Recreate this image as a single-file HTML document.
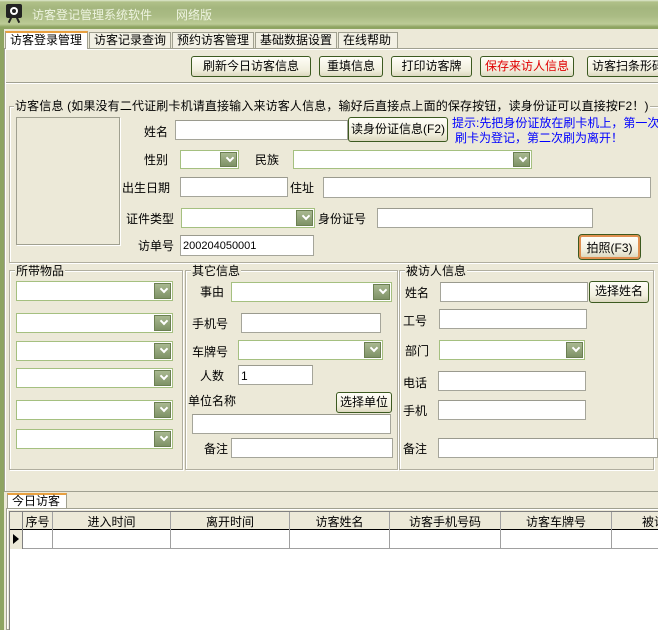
<!DOCTYPE html>
<html><head><meta charset="utf-8"><style>
*{margin:0;padding:0;box-sizing:border-box}
body{width:658px;height:630px;overflow:hidden;background:#ece9d8;font-family:"Liberation Sans","WenQuanYi Zen Hei","Noto Sans CJK SC",sans-serif;font-size:12px;color:#000;position:relative}
.a{position:absolute}
.t{position:absolute;white-space:nowrap;line-height:14px}
.in{position:absolute;background:#fff;border:1px solid #a5a59a;border-top-color:#9a9a8e}
.cb{position:absolute;background:#fff;border:1px solid #a5c080}
.cb::after{content:"";position:absolute;right:1px;top:1px;bottom:1px;width:15px;background:linear-gradient(#a8b890,#7e9266);border:1px solid #6c8052}
.cb i{position:absolute;right:5px;top:50%;width:6px;height:6px;border-right:2px solid #fff;border-bottom:2px solid #fff;transform:rotate(45deg);z-index:2;margin-top:-5px}
.bt{position:absolute;background:linear-gradient(#fffef8,#f0eedc 70%,#dcd8c0);border:1px solid #3c5a20;border-radius:3px;text-align:center;line-height:18px;font-size:12px}
.gb{position:absolute;border:1px solid #b0ae9f;box-shadow:inset 1px 1px 0 #fff,1px 1px 0 #fff}
.gl{position:absolute;background:#ece9d8;padding:0 1px;white-space:nowrap;line-height:14px}
.vl{position:absolute;top:512px;width:1px;height:37px;background:#a0a0a0}
.hd{position:absolute;top:515px;text-align:center;white-space:nowrap;line-height:14px}
</style></head><body>
<div class="a" style="left:0;top:0;width:658px;height:29px;background:linear-gradient(#e0ead0 0,#b0c088 2px,#a4b67e 8px,#aabb84 16px,#bccb96 24px,#8ea462 27px,#8ea462 29px)"></div>
<div class="a" style="left:6px;top:4px;width:16px;height:14px;background:#222;border-radius:2px"></div>
<div class="a" style="left:10px;top:7px;width:8px;height:8px;background:#fff;border-radius:50%"></div>
<div class="a" style="left:12px;top:9px;width:4px;height:4px;background:#222;border-radius:50%"></div>
<div class="a" style="left:9px;top:17px;width:2px;height:6px;background:#222;transform:rotate(25deg)"></div>
<div class="a" style="left:17px;top:17px;width:2px;height:6px;background:#222;transform:rotate(-25deg)"></div>
<div class="t" style="left:32px;top:8px;color:#eef4e0;font-size:12px">访客登记管理系统软件</div>
<div class="t" style="left:176px;top:8px;color:#eef4e0">网络版</div>
<div class="a" style="left:0;top:29px;width:4px;height:601px;background:#8ea462"></div>
<div class="a" style="left:4px;top:48px;width:654px;height:444px;border:1px solid #a0a090;border-right:none;background:#ece9d8;box-shadow:inset 1px 1px 0 #fff"></div>
<div class="a" style="left:5px;top:31px;width:83px;height:18px;background:#fff;border:1px solid #a0a090;border-bottom:none;border-top:2px solid #e8a040"></div>
<div class="t" style="left:10px;top:33px;font-size:12px">访客登录管理</div>
<div class="a" style="left:89px;top:32px;width:82px;height:16px;border:1px solid #a0a090;border-bottom:none;background:#f2f0e4"></div>
<div class="t" style="left:94px;top:33px">访客记录查询</div>
<div class="a" style="left:172px;top:32px;width:82px;height:16px;border:1px solid #a0a090;border-bottom:none;background:#f2f0e4"></div>
<div class="t" style="left:177px;top:33px">预约访客管理</div>
<div class="a" style="left:255px;top:32px;width:82px;height:16px;border:1px solid #a0a090;border-bottom:none;background:#f2f0e4"></div>
<div class="t" style="left:260px;top:33px">基础数据设置</div>
<div class="a" style="left:338px;top:32px;width:60px;height:16px;border:1px solid #a0a090;border-bottom:none;background:#f2f0e4"></div>
<div class="t" style="left:343px;top:33px">在线帮助</div>
<div class="bt" style="left:191px;top:56px;width:120px;height:21px">刷新今日访客信息</div>
<div class="bt" style="left:319px;top:56px;width:64px;height:21px">重填信息</div>
<div class="bt" style="left:391px;top:56px;width:81px;height:21px">打印访客牌</div>
<div class="bt" style="left:480px;top:56px;width:94px;height:21px;color:#e00000">保存来访人信息</div>
<div class="bt" style="left:587px;top:56px;width:80px;height:21px;text-align:left;padding-left:4px">访客扫条形码</div>
<div class="a" style="left:6px;top:82px;width:652px;height:2px;border-top:1px solid #a0a090;border-bottom:1px solid #fff"></div>
<div class="gb" style="left:9px;top:106px;width:660px;height:157px"></div>
<div class="gl" style="left:14px;top:99px;letter-spacing:0.15px">访客信息 (如果没有二代证刷卡机请直接输入来访客人信息，输好后直接点上面的保存按钮，读身份证可以直接按F2！)</div>
<div class="a" style="left:16px;top:117px;width:104px;height:128px;border:1px solid #a0a090;box-shadow:1px 1px 0 #fff"></div>
<div class="t" style="left:144px;top:125px">姓名</div>
<div class="in" style="left:175px;top:120px;width:173px;height:20px"></div>
<div class="bt" style="left:348px;top:117px;width:100px;height:25px;line-height:23px">读身份证信息(F2)</div>
<div class="t" style="left:452px;top:116px;color:#0000ff">提示:先把身份证放在刷卡机上，第一次</div>
<div class="t" style="left:455px;top:131px;color:#0000ff">刷卡为登记，第二次刷为离开！</div>
<div class="t" style="left:144px;top:153px">性别</div>
<div class="cb" style="left:180px;top:150px;width:59px;height:19px"><i></i></div>
<div class="t" style="left:255px;top:153px">民族</div>
<div class="cb" style="left:293px;top:150px;width:239px;height:19px"><i></i></div>
<div class="t" style="left:122px;top:181px">出生日期</div>
<div class="in" style="left:180px;top:177px;width:108px;height:20px"></div>
<div class="t" style="left:290px;top:181px">住址</div>
<div class="in" style="left:323px;top:177px;width:328px;height:21px"></div>
<div class="t" style="left:126px;top:212px">证件类型</div>
<div class="cb" style="left:181px;top:208px;width:134px;height:20px"><i></i></div>
<div class="t" style="left:318px;top:212px">身份证号</div>
<div class="in" style="left:377px;top:208px;width:216px;height:20px"></div>
<div class="t" style="left:138px;top:239px">访单号</div>
<div class="in" style="left:180px;top:235px;width:134px;height:21px"></div>
<div class="t" style="left:183px;top:239px;font-size:11px">200204050001</div>
<div class="bt" style="left:579px;top:235px;width:61px;height:24px;line-height:22px;border:2px solid #e09050;outline:1px solid #3c5a20">拍照(F3)</div>
<div class="gb" style="left:9px;top:270px;width:174px;height:200px"></div>
<div class="gl" style="left:15px;top:264px">所带物品</div>
<div class="cb" style="left:16px;top:281px;width:157px;height:20px"><i></i></div>
<div class="cb" style="left:16px;top:313px;width:157px;height:20px"><i></i></div>
<div class="cb" style="left:16px;top:341px;width:157px;height:20px"><i></i></div>
<div class="cb" style="left:16px;top:368px;width:157px;height:20px"><i></i></div>
<div class="cb" style="left:16px;top:400px;width:157px;height:20px"><i></i></div>
<div class="cb" style="left:16px;top:429px;width:157px;height:20px"><i></i></div>
<div class="gb" style="left:185px;top:270px;width:213px;height:200px"></div>
<div class="gl" style="left:191px;top:264px">其它信息</div>
<div class="t" style="left:200px;top:285px">事由</div>
<div class="cb" style="left:231px;top:282px;width:161px;height:20px"><i></i></div>
<div class="t" style="left:192px;top:317px">手机号</div>
<div class="in" style="left:241px;top:313px;width:140px;height:20px"></div>
<div class="t" style="left:192px;top:345px">车牌号</div>
<div class="cb" style="left:238px;top:340px;width:145px;height:20px"><i></i></div>
<div class="t" style="left:200px;top:369px">人数</div>
<div class="in" style="left:238px;top:365px;width:75px;height:20px"></div>
<div class="t" style="left:241px;top:369px">1</div>
<div class="t" style="left:188px;top:394px">单位名称</div>
<div class="bt" style="left:336px;top:392px;width:56px;height:21px">选择单位</div>
<div class="in" style="left:192px;top:414px;width:199px;height:20px"></div>
<div class="t" style="left:204px;top:442px">备注</div>
<div class="in" style="left:231px;top:438px;width:162px;height:20px"></div>
<div class="gb" style="left:399px;top:270px;width:255px;height:200px"></div>
<div class="gl" style="left:405px;top:264px">被访人信息</div>
<div class="t" style="left:405px;top:286px">姓名</div>
<div class="in" style="left:440px;top:282px;width:148px;height:20px"></div>
<div class="bt" style="left:589px;top:281px;width:60px;height:22px">选择姓名</div>
<div class="t" style="left:403px;top:314px">工号</div>
<div class="in" style="left:439px;top:309px;width:148px;height:20px"></div>
<div class="t" style="left:405px;top:344px">部门</div>
<div class="cb" style="left:439px;top:340px;width:146px;height:20px"><i></i></div>
<div class="t" style="left:403px;top:376px">电话</div>
<div class="in" style="left:438px;top:371px;width:148px;height:20px"></div>
<div class="t" style="left:403px;top:404px">手机</div>
<div class="in" style="left:438px;top:400px;width:148px;height:20px"></div>
<div class="t" style="left:403px;top:442px">备注</div>
<div class="in" style="left:438px;top:438px;width:220px;height:20px"></div>
<div class="a" style="left:7px;top:493px;width:60px;height:16px;background:#fff;border:1px solid #a0a090;border-bottom:none;border-top:2px solid #e8a040"></div>
<div class="t" style="left:12px;top:494px">今日访客</div>
<div class="a" style="left:6px;top:508px;width:652px;height:122px;border:1px solid #a0a090;border-right:none;box-shadow:inset 1px 1px 0 #fff"></div>
<div class="a" style="left:9px;top:511px;width:649px;height:119px;background:#fff;border:1px solid #808080;border-right:none;border-bottom:none"></div>
<div class="a" style="left:10px;top:512px;width:648px;height:18px;background:#ece9d8;border-bottom:1px solid #000"></div>
<div class="a" style="left:10px;top:530px;width:648px;height:19px;border-bottom:1px solid #a0a0a0"></div>
<div class="a" style="left:10px;top:530px;width:13px;height:19px;background:#ece9d8;border-right:1px solid #000"></div>
<div class="a" style="left:13px;top:534px;width:0;height:0;border-top:5px solid transparent;border-bottom:5px solid transparent;border-left:6px solid #000"></div>
<div class="vl" style="left:22px;background:#808080"></div>
<div class="vl" style="left:52px"></div>
<div class="vl" style="left:170px"></div>
<div class="vl" style="left:289px"></div>
<div class="vl" style="left:389px"></div>
<div class="vl" style="left:500px"></div>
<div class="vl" style="left:611px"></div>
<div class="hd" style="left:23px;width:29px">序号</div>
<div class="hd" style="left:53px;width:117px">进入时间</div>
<div class="hd" style="left:171px;width:118px">离开时间</div>
<div class="hd" style="left:290px;width:99px">访客姓名</div>
<div class="hd" style="left:390px;width:110px">访客手机号码</div>
<div class="hd" style="left:501px;width:110px">访客车牌号</div>
<div class="hd" style="left:642px;width:30px;text-align:left">被访</div>
</body></html>
